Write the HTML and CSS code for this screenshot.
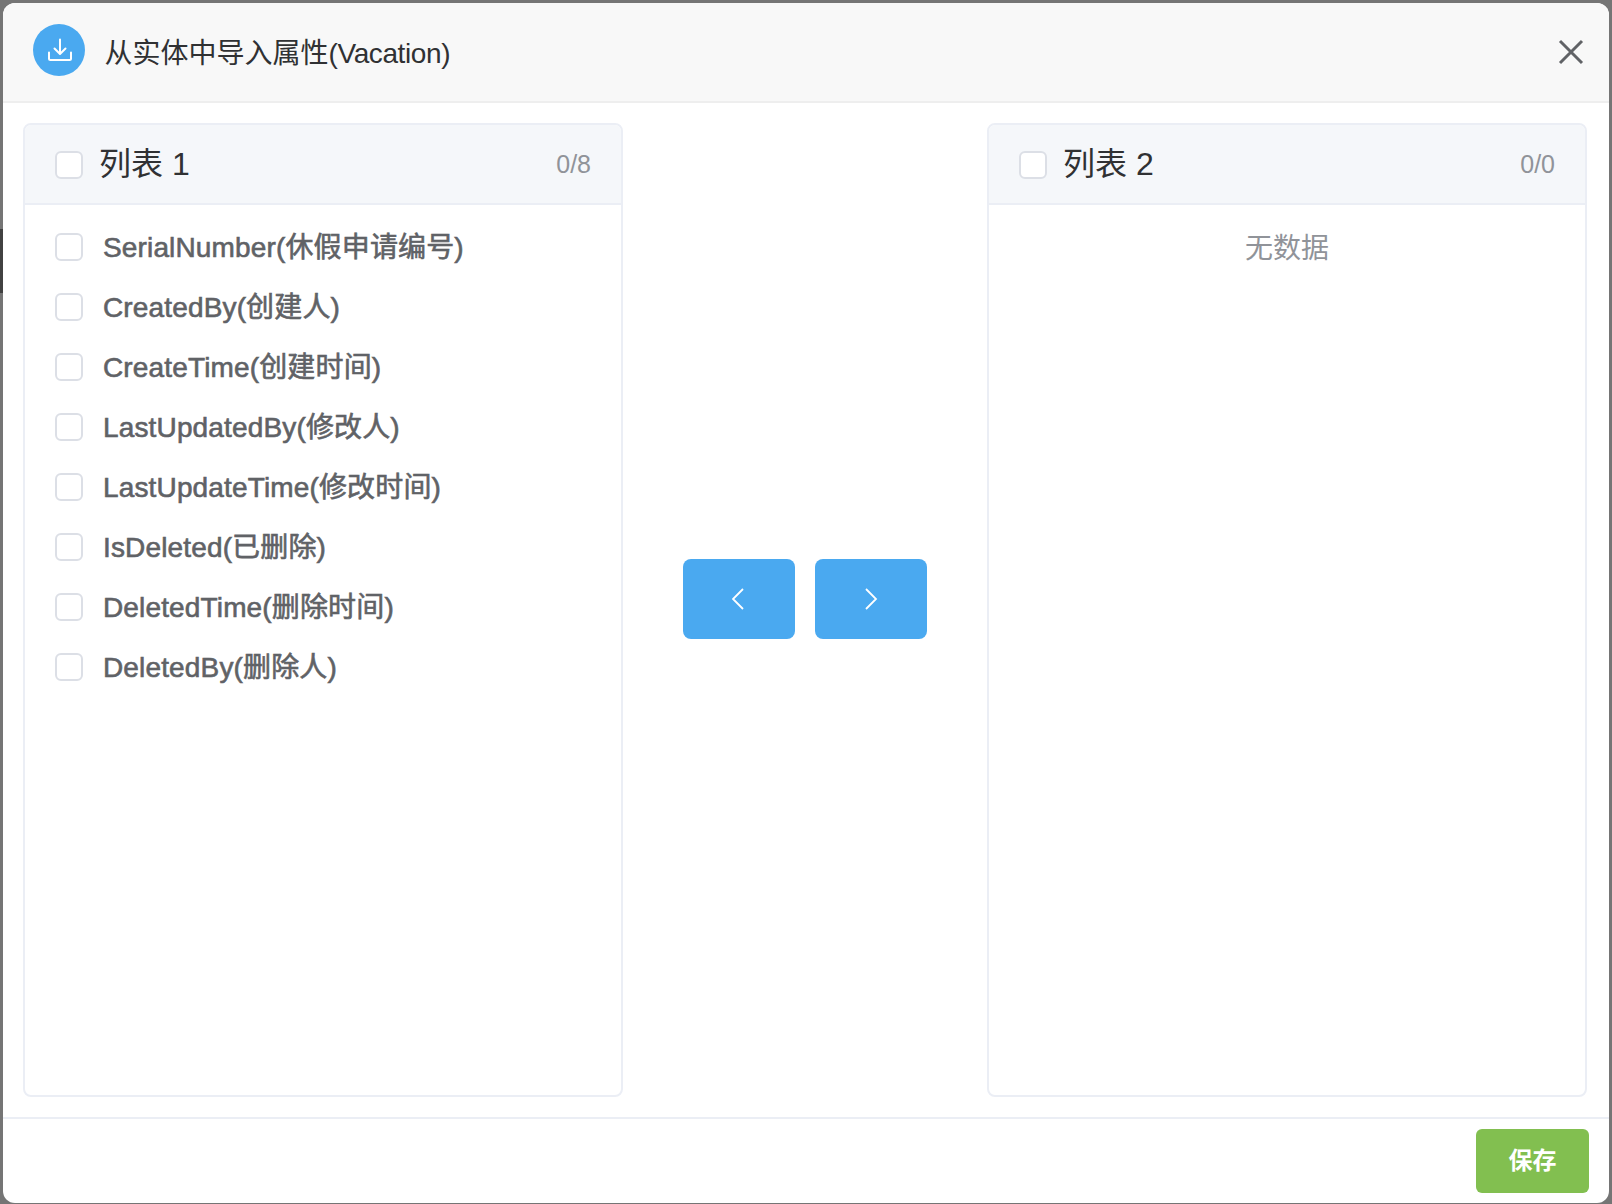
FILE: index.html
```html
<!DOCTYPE html>
<html lang="zh">
<head>
<meta charset="utf-8">
<title>从实体中导入属性</title>
<link rel="stylesheet" href="styles.css">
</head>
<body>
<div class="backdrop-mark"></div>
<div class="modal">
  <header class="modal-head">
    <span class="head-icon">
      <svg width="26" height="24" viewBox="0 0 26 24" fill="none" stroke="#fff" stroke-width="2" stroke-linecap="round" stroke-linejoin="round"><path d="M13 1.500v14M7.500 10.500l5.500 5.500 5.500-5.500"/><path d="M2 14.500v6a1.500 1.500 0 0 0 1.500 1.500h19a1.500 1.500 0 0 0 1.500-1.500v-6"/></svg>
    </span>
    <h1 class="modal-title">从实体中导入属性<span class="title-latin">(Vacation)</span></h1>
    <svg class="close" width="26" height="26" viewBox="0 0 26 26" fill="none" stroke="#606266" stroke-width="3"><path d="M2 2l22 22M24 2L2 24"/></svg>
  </header>
  <main class="transfer">
    <section class="panel">
      <div class="panel-head">
        <span class="box"></span><span class="panel-title">列表 1</span><span class="count">0/8</span>
      </div>
      <ul class="items">
        <li class="item"><span class="box"></span><span class="label">SerialNumber(休假申请编号)</span></li>
        <li class="item"><span class="box"></span><span class="label">CreatedBy(创建人)</span></li>
        <li class="item"><span class="box"></span><span class="label">CreateTime(创建时间)</span></li>
        <li class="item"><span class="box"></span><span class="label">LastUpdatedBy(修改人)</span></li>
        <li class="item"><span class="box"></span><span class="label">LastUpdateTime(修改时间)</span></li>
        <li class="item"><span class="box"></span><span class="label">IsDeleted(已删除)</span></li>
        <li class="item"><span class="box"></span><span class="label">DeletedTime(删除时间)</span></li>
        <li class="item"><span class="box"></span><span class="label">DeletedBy(删除人)</span></li>
      </ul>
    </section>
    <div class="moves">
      <button class="move" type="button"><svg width="14" height="22" viewBox="0 0 14 22" fill="none" stroke="#fff" stroke-width="1.800"><path d="M11 1L1 11l10 10"/></svg></button>
      <button class="move" type="button"><svg width="14" height="22" viewBox="0 0 14 22" fill="none" stroke="#fff" stroke-width="1.800"><path d="M2 1l10 10L2 21"/></svg></button>
    </div>
    <section class="panel">
      <div class="panel-head">
        <span class="box"></span><span class="panel-title">列表 2</span><span class="count">0/0</span>
      </div>
      <p class="empty">无数据</p>
    </section>
  </main>
  <footer class="modal-foot">
    <button class="save" type="button">保存</button>
  </footer>
</div>
</body>
</html>
```
FILE: styles.css
```css
* { box-sizing: border-box; }
html, body { margin: 0; height: 100%; }
body {
  background: #757575;
  padding: 3px 3px 1px 3px;
  font-family: "Liberation Sans", "Noto Sans CJK SC", sans-serif;
  position: relative;
  overflow: hidden;
}
.backdrop-mark {
  position: absolute;
  left: 0;
  top: 229px;
  width: 3px;
  height: 64px;
  background: #414141;
}
.modal {
  height: 1200px;
  background: #fff;
  border-radius: 12px;
  display: flex;
  flex-direction: column;
  overflow: hidden;
}
.modal-head {
  height: 100px;
  flex: none;
  background: #f8f8f8;
  border-bottom: 2px solid #eeeeee;
  display: flex;
  align-items: center;
  padding: 0 25px 0 30px;
}
.head-icon {
  width: 52px;
  height: 52px;
  margin-bottom: 4px;
  border-radius: 50%;
  background: #4aa9f0;
  display: flex;
  align-items: center;
  justify-content: center;
  flex: none;
}
.head-icon svg { margin-left: 2px; }
.modal-title {
  margin: 0 0 2px 19.5px;
  font-size: 28px;
  font-weight: 400;
  color: #303133;
  flex: 1;
}
.title-latin { letter-spacing: -0.4px; }
.close { flex: none; }
.transfer {
  flex: 1;
  display: flex;
  justify-content: space-between;
  padding: 20px 22px 20px 20px;
  min-height: 0;
}
.panel {
  width: 600px;
  border: 2px solid #ebeef5;
  border-radius: 8px;
  overflow: hidden;
}
.panel-head {
  height: 80px;
  background: #f5f7fa;
  border-bottom: 2px solid #ebeef5;
  display: flex;
  align-items: center;
  padding: 0 30px;
}
.panel-head .box { margin-top: 2px; }
.box {
  width: 28px;
  height: 28px;
  flex: none;
  background: #fff;
  border: 2px solid #dcdfe6;
  border-radius: 6px;
}
.panel-title {
  margin-left: 16px;
  padding-bottom: 6px;
  font-size: 32px;
  color: #303133;
  flex: 1;
}
.count {
  font-size: 25px;
  color: #909399;
}
.items {
  list-style: none;
  margin: 0;
  padding: 12px 0 0;
}
.item {
  height: 60px;
  display: flex;
  align-items: center;
  padding-left: 30px;
  gap: 20px;
  font-size: 28px;
  letter-spacing: 0.15px;
  color: #606266;
  -webkit-text-stroke: 0.6px #606266;
}
.label { padding-bottom: 4px; }
.empty {
  margin: 0;
  padding-top: 14px;
  line-height: 60px;
  text-align: center;
  font-size: 28px;
  color: #909399;
}
.moves {
  display: flex;
  align-self: center;
  gap: 20px;
  margin-bottom: 22px;
}
.move {
  width: 112px;
  height: 80px;
  border: 0;
  border-radius: 8px;
  background: #4aa9f0;
  display: flex;
  align-items: center;
  justify-content: center;
  padding: 0;
}
.modal-foot {
  flex: none;
  height: 86px;
  border-top: 2px solid #ebeef5;
  display: flex;
  justify-content: flex-end;
  align-items: flex-start;
  padding: 10px 20px 0 0;
}
.save {
  width: 113px;
  height: 64px;
  border: 0;
  border-radius: 6px;
  background: #82bf50;
  color: #fff;
  font-family: inherit;
  font-size: 24px;
  font-weight: 700;
  padding: 0 0 6px;
}
```
